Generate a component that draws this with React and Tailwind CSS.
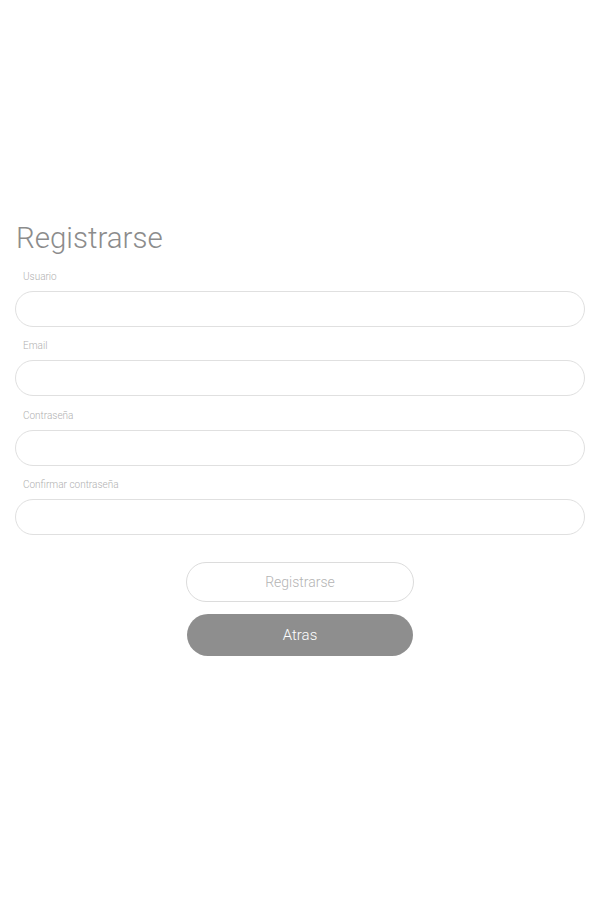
import React from "react";

const fields = ["Usuario", "Email", "Contraseña", "Confirmar contraseña"];

export default function App() {
  return (
    <div className="min-h-[900px] w-full bg-white" style={{ fontFamily: "Roboto, 'Liberation Sans', sans-serif" }}>
      <div className="pt-[220px] pl-[15px] pr-[14px]">
        <h1 className="pl-px text-[29.5px] leading-[36px] font-light text-[#8c8c8c]">Registrarse</h1>
        <div className="mt-[14px] flex flex-col gap-[12px]">
          {fields.map((f, i) => (
            <div key={f} className={i === 2 ? "flex flex-col pt-px" : "flex flex-col"}>
              <label className="pl-[8px] text-[10px] leading-[14px] font-light text-[#b0b0b0]">{f}</label>
              <input
                type={f.startsWith("Con") ? "password" : "text"}
                className="mt-[7px] h-[36px] w-full rounded-full border border-[#e0e0e0] bg-white px-4 outline-none"
              />
            </div>
          ))}
        </div>
        <div className="mt-[27px] flex flex-col items-center gap-[12px]">
          <button className="h-[40px] w-[228px] rounded-full border border-[#dcdcdc] bg-white text-[14px] font-light text-[#b4b4b4]">
            Registrarse
          </button>
          <button className="h-[42px] w-[226px] rounded-full bg-[#8e8e8e] text-[15px] font-light text-white">
            Atras
          </button>
        </div>
      </div>
    </div>
  );
}
